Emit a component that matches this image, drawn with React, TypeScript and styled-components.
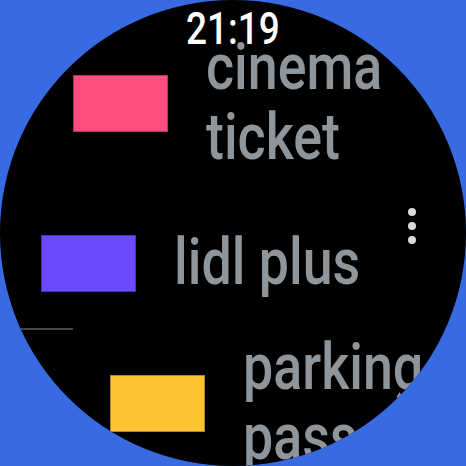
import styled, { createGlobalStyle } from 'styled-components';

type Pass = {
  id: string;
  label: string;
  color: string;
  indent: number;
  gap: number;
};

const passes: Pass[] = [
  { id: 'cinema', label: 'cinema ticket', color: '#ff4d7c', indent: 73, gap: 0 },
  { id: 'lidl', label: 'lidl plus', color: '#6a49ff', indent: 41, gap: 55 },
  { id: 'parking', label: 'parking passes', color: '#ffc334', indent: 110, gap: 35 },
];

export default function App() {
  return (
    <>
      <GlobalStyle />
      <S.Screen>
        <S.Face>
          <S.List>
            {passes.map((pass) => (
              <S.Row key={pass.id} $indent={pass.indent} $gap={pass.gap}>
                <S.Swatch $color={pass.color} />
                <S.Label>{pass.label}</S.Label>
              </S.Row>
            ))}
          </S.List>
          <S.Clock>21:19</S.Clock>
          <S.Menu>
            <S.Dot />
            <S.Dot />
            <S.Dot />
          </S.Menu>
          <S.Scroll />
        </S.Face>
      </S.Screen>
    </>
  );
}

const GlobalStyle = createGlobalStyle`
  html, body {
    margin: 0;
    padding: 0;
    background: #386be2;
  }
`;

const S = {
  Screen: styled.div`
    width: 466px;
    height: 466px;
    background: #386be2;
    display: flex;
    align-items: center;
    justify-content: center;
  `,
  Face: styled.div`
    position: relative;
    width: 466px;
    height: 466px;
    border-radius: 50%;
    background: #000;
    overflow: hidden;
    font-family: Roboto, 'Liberation Sans', sans-serif;
  `,
  Clock: styled.div`
    position: absolute;
    top: 3px;
    left: 0;
    right: 0;
    text-align: center;
    color: #fff;
    font-size: 44px;
    font-weight: 500;
    transform: scaleX(0.84);
  `,
  List: styled.div`
    display: flex;
    flex-direction: column;
    padding-top: 33px;
  `,
  Row: styled.div<{ $indent: number; $gap: number }>`
    display: flex;
    align-items: center;
    padding-left: ${({ $indent }) => $indent}px;
    margin-top: ${({ $gap }) => $gap}px;
  `,
  Swatch: styled.div<{ $color: string }>`
    flex: none;
    width: 95px;
    height: 57px;
    box-sizing: border-box;
    background: ${({ $color }) => $color};
    border: 1px solid rgba(0, 0, 0, 0.3);
  `,
  Label: styled.div`
    flex: none;
    width: 240px;
    margin-left: 38px;
    color: #8e959b;
    font-size: 64px;
    line-height: 70px;
    font-weight: 500;
    transform: scaleX(0.84);
    transform-origin: left center;
  `,
  Menu: styled.div`
    position: absolute;
    top: 208px;
    left: 408px;
    display: flex;
    flex-direction: column;
    gap: 6px;
  `,
  Dot: styled.div`
    width: 8px;
    height: 8px;
    border-radius: 50%;
    background: #d8d8d8;
  `,
  Scroll: styled.div`
    position: absolute;
    top: 328px;
    left: 0;
    width: 73px;
    height: 2px;
    background: #474747;
  `,
};
